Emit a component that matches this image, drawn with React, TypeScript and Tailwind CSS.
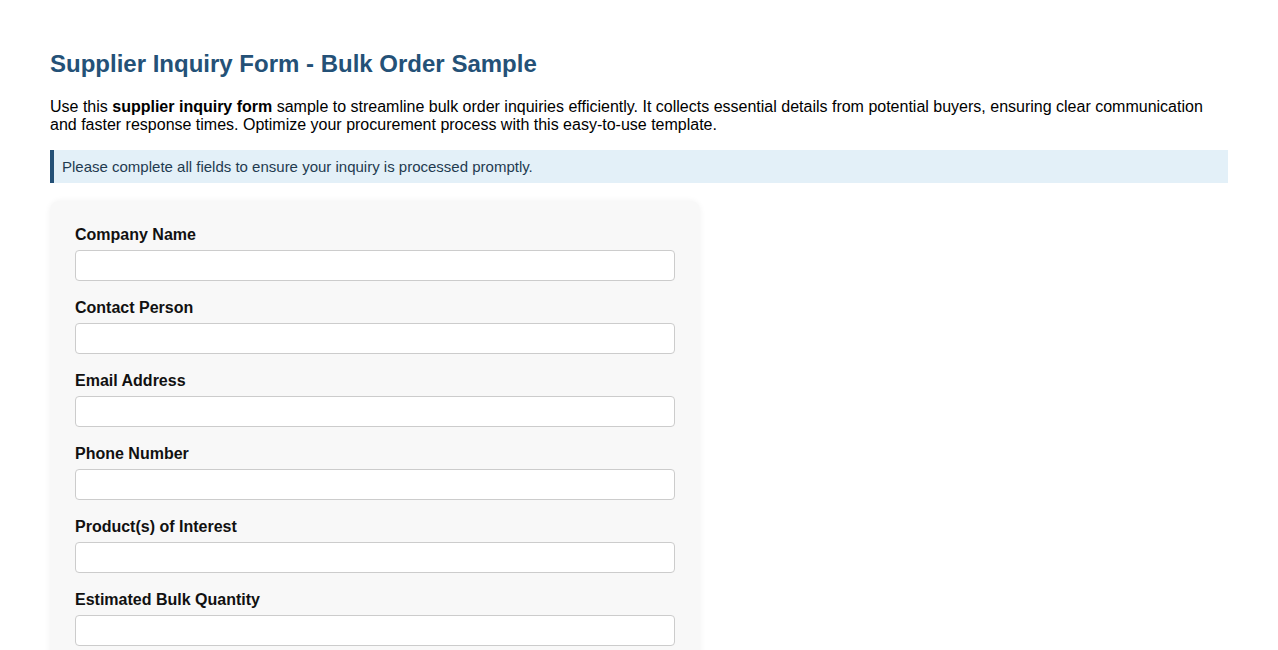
const fields = [
  'Company Name',
  'Contact Person',
  'Email Address',
  'Phone Number',
  'Product(s) of Interest',
  'Estimated Bulk Quantity',
]

export default function App() {
  return (
    <div className="min-h-screen bg-white px-[50px] pt-[50px] font-['Liberation_Sans',Arial,sans-serif] text-black">
      <h1 className="text-[24px] font-bold leading-[28px] text-[#245177]">
        Supplier Inquiry Form - Bulk Order Sample
      </h1>

      <p className="mt-[20px] text-[16px] leading-[18px]">
        Use this <strong>supplier inquiry form</strong> sample to streamline bulk order inquiries efficiently. It
        collects essential details from potential buyers, ensuring clear communication and faster response times.
        Optimize your procurement process with this easy-to-use template.
      </p>

      <div className="mt-[16px] border-l-4 border-[#245177] bg-[#e3f0f8] py-[8px] pl-[8px] text-[15px] leading-[17px] text-[#1f3b50]">
        Please complete all fields to ensure your inquiry is processed promptly.
      </div>

      {/* form card */}
      <div className="mt-[18px] w-[650px] rounded-[10px] bg-[#f8f8f8] px-[25px] pt-[25px] pb-[20px] shadow-[0_0_6px_rgba(0,0,0,0.06)]">
        {fields.map((f) => (
          <div key={f} className="mb-[18px] last:mb-0">
            <label className="mb-[6px] block text-[16px] font-bold leading-[18px] text-[#111]">{f}</label>
            <input
              type="text"
              className="block h-[31px] w-[600px] rounded-[4px] border border-[#cccccc] bg-white px-[8px] text-[15px] outline-none"
            />
          </div>
        ))}
      </div>
    </div>
  )
}
